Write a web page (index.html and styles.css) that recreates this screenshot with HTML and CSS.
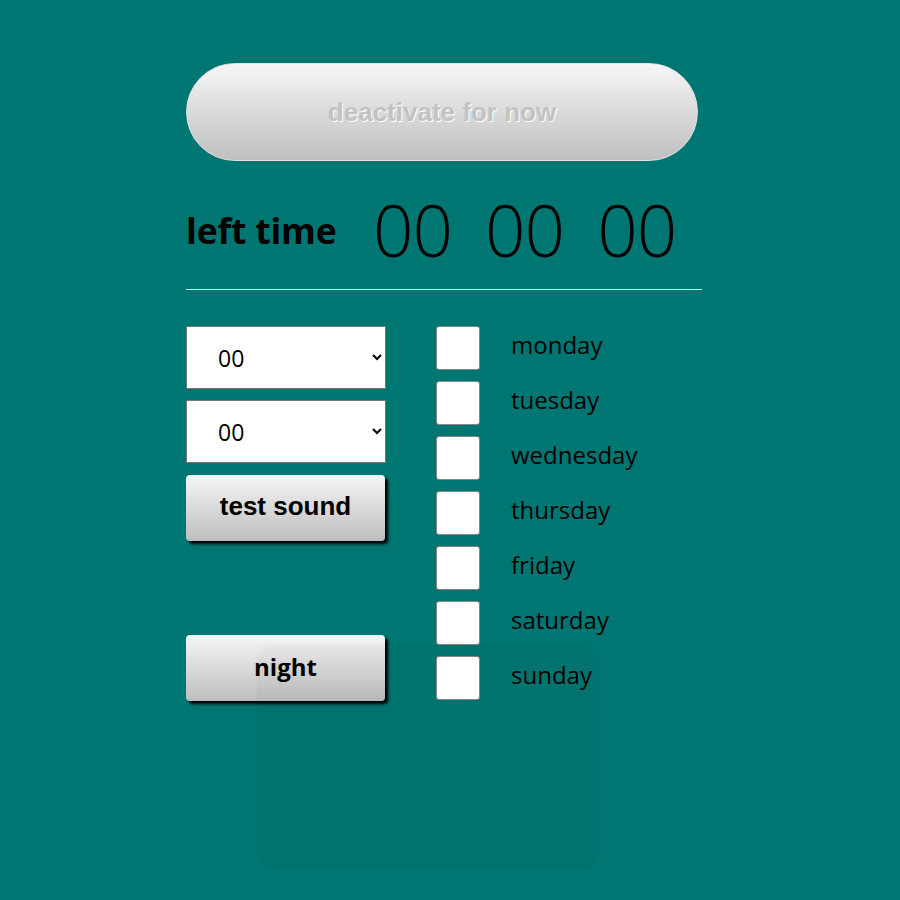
FILE: index.html
```html
<!DOCTYPE html>
<html>
<head>
<meta charset="utf-8">
<link rel="stylesheet" href="styles.css">
</head>
<body>
<div class="app">
  <button class="pill">deactivate for now</button>
  <div class="timer">
    <span class="timer-label">left time</span>
    <div class="digits">
      <span class="dg">00</span>
      <span class="dg">00</span>
      <span class="dg">00</span>
    </div>
  </div>
  <div class="rule"></div>
  <div class="controls">
    <div class="left-col">
      <select class="sel"><option>00</option></select>
      <select class="sel"><option>00</option></select>
      <button class="btn btn-test">test sound</button>
      <button class="btn btn-night">night</button>
    </div>
    <div class="days">
      <label class="day"><span class="box"></span><span class="day-name">monday</span></label>
      <label class="day"><span class="box"></span><span class="day-name">tuesday</span></label>
      <label class="day"><span class="box"></span><span class="day-name">wednesday</span></label>
      <label class="day"><span class="box"></span><span class="day-name">thursday</span></label>
      <label class="day"><span class="box"></span><span class="day-name">friday</span></label>
      <label class="day"><span class="box"></span><span class="day-name">saturday</span></label>
      <label class="day"><span class="box"></span><span class="day-name">sunday</span></label>
    </div>
  </div>
</div>
<div class="ghost-card"></div>
</body>
</html>
```

FILE: styles.css
```css
html, body {
  margin: 0;
  padding: 0;
  background: #007672;
  height: 100%;
}
body {
  font-family: "Open Sans", "Noto Sans", sans-serif;
  position: relative;
}
.app {
  padding: 63px 0 0 186px;
  width: 516px;
}
.pill {
  display: block;
  width: 512px;
  height: 98px;
  border-radius: 49px;
  border: 1px solid #e2e2e2;
  background: linear-gradient(#f6f6f6, #bfbfbf);
  font-family: "Liberation Sans", Arial, sans-serif;
  font-weight: bold;
  font-size: 26px;
  color: #c2c2c2;
  text-shadow: 1px 1px 0 #fff;
  padding: 0;
}
.timer {
  display: flex;
  align-items: center;
  height: 74px;
  margin-top: 32px;
}
.timer-label {
  font-weight: bold;
  font-size: 35.5px;
  color: #000;
  width: 187px;
  letter-spacing: -0.2px;
}
.digits {
  display: flex;
  gap: 33px;
}
.dg {
  font-weight: 300;
  font-size: 71px;
  line-height: 1;
  color: #000;
  letter-spacing: -1px;
  position: relative;
  top: -1px;
}
.rule {
  margin-top: 22px;
  height: 1px;
  width: 516px;
  background: #d8e6e5;
}
.controls {
  display: flex;
  margin-top: 36px;
  gap: 50px;
}
.left-col {
  width: 200px;
  display: flex;
  flex-direction: column;
}
.sel {
  width: 200px;
  height: 63px;
  border: 1px solid #767676;
  border-radius: 0;
  background: #fff;
  font-family: "Open Sans", sans-serif;
  font-size: 23px;
  padding-left: 27px;
  color: #000;
  margin-bottom: 11px;
}
.btn {
  width: 199px;
  height: 66px;
  border: none;
  border-radius: 4px;
  background: linear-gradient(#f6f6f6, #bdbdbd);
  box-shadow: 3px 3px 3px #000;
  color: #000;
  font-weight: bold;
  font-size: 24px;
  padding: 0;
}
.btn-test {
  margin-top: 1px;
  font-family: "Liberation Sans", Arial, sans-serif;
  font-size: 26px;
  padding-bottom: 4px;
}
.btn-night {
  margin-top: 94px;
  font-family: "Open Sans", sans-serif;
  padding-bottom: 4px;
}
.days {
  display: flex;
  flex-direction: column;
  gap: 11px;
  position: relative;
  z-index: 2;
}
.day {
  display: flex;
  align-items: center;
  height: 44px;
  gap: 31px;
}
.box {
  width: 42px;
  height: 42px;
  border: 1px solid #858585;
  border-radius: 3px;
  background: #fff;
}
.day-name {
  font-size: 24px;
  color: #000;
  position: relative;
  top: -4px;
}
.ghost-card {
  position: absolute;
  left: 260px;
  top: 645px;
  width: 336px;
  height: 218px;
  border-radius: 12px;
  background: rgba(0, 0, 0, 0.025);
  box-shadow: 0 2px 6px rgba(0, 0, 0, 0.08);
  z-index: 1;
}
```
